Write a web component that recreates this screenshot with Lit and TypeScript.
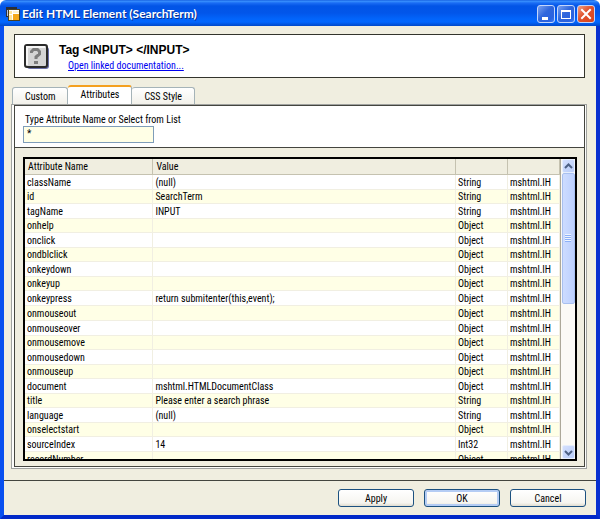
import { LitElement, html, css, svg } from "lit";
import { customElement, state } from "lit/decorators.js";
import { classMap } from "lit/directives/class-map.js";

interface Attribute {
  name: string;
  value: string;
  type: string;
}

const attr = (name: string, value = "", type = "Object"): Attribute => ({ name, value, type });

const ATTRIBUTES: Attribute[] = [
  attr("className", "(null)", "String"),
  attr("id", "SearchTerm", "String"),
  attr("tagName", "INPUT", "String"),
  attr("onhelp"),
  attr("onclick"),
  attr("ondblclick"),
  attr("onkeydown"),
  attr("onkeyup"),
  attr("onkeypress", "return submitenter(this,event);"),
  attr("onmouseout"),
  attr("onmouseover"),
  attr("onmousemove"),
  attr("onmousedown"),
  attr("onmouseup"),
  attr("document", "mshtml.HTMLDocumentClass"),
  attr("title", "Please enter a search phrase", "String"),
  attr("language", "(null)", "String"),
  attr("onselectstart"),
  attr("sourceIndex", "14", "Int32"),
  attr("recordNumber"),
];

const TABS = ["Custom", "Attributes", "CSS Style"];

@customElement("title-bar")
class TitleBar extends LitElement {
  static styles = css`
    :host {
      display: flex;
      align-items: center;
      height: 26px;
      flex: none;
      padding: 2px 5px 0 6px;
      box-sizing: border-box;
      border-radius: 6px 6px 0 0;
      background: linear-gradient(#0a50d8 0, #3c94ff 1px, #1a6cf4 3px, #0254e6 6px, #0256ea 13px, #0265fb 19px, #0266fe 22px, #0148c8 26px);
    }
    .logo { width: 14px; height: 14px; flex: none; }
    h1 {
      flex: 1;
      margin: 0 0 0 2px;
      font: bold 12px/16px Lato, sans-serif;
      color: #fff;
      white-space: nowrap;
      text-shadow: 1px 1px 0 #0a2f90;
    }
    .controls { display: flex; gap: 2px; }
    button {
      width: 18px;
      height: 18px;
      padding: 0;
      border: 1px solid #c3d6fc;
      border-radius: 3px;
      background: linear-gradient(135deg, #7ba2f0, #2f66dc 45%, #2a62e0 80%, #3c7cf4);
    }
    .close { background: linear-gradient(135deg, #f0a084, #e0522c 45%, #d8431c); }
    button svg { display: block; width: 16px; height: 16px; }
  `;

  render() {
    return html`
      <svg class="logo" viewBox="0 0 14 14" shape-rendering="crispEdges" aria-hidden="true">
        <path d="M0 0h11v10H0z" fill="#2a2f3c" />
        <path d="M1 3h1v6H1z" fill="#b8c4dc" />
        <path d="M2 2h12v12H2z" fill="#4a4020" />
        <path d="M3 3h10v10H3z" fill="#fff" />
        <path d="M3 4h3v3H3zM3 8h3v5H3z" fill="#ffe49a" />
        <path d="M7 7h6v6H7z" fill="#f4a818" />
        <path d="M7 4h6v2H7z" fill="#fff4d0" />
      </svg>
      <h1>Edit HTML Element (SearchTerm)</h1>
      <div class="controls">
        <button aria-label="Minimize">
          <svg viewBox="0 0 16 16"><path d="M4 11h6v3H4z" fill="#fff" /></svg>
        </button>
        <button aria-label="Maximize">
          <svg viewBox="0 0 16 16"><path d="M3 4h10v9H3zM4 6v6h8V6z" fill="#fff" fill-rule="evenodd" /></svg>
        </button>
        <button class="close" aria-label="Close">
          <svg viewBox="0 0 16 16"><path d="M4 4l8 8M12 4l-8 8" stroke="#fff" stroke-width="2" stroke-linecap="square" /></svg>
        </button>
      </div>
    `;
  }
}

@customElement("attribute-grid")
class AttributeGrid extends LitElement {
  static properties = { rows: { attribute: false } };
  declare rows: Attribute[];

  static styles = css`
    :host {
      display: flex;
      min-height: 0;
      overflow: hidden;
      border: 2px solid #000;
      background: #fff;
    }
    .rows { flex: 1; min-width: 0; overflow: hidden; border-right: 1px solid #aca899; }
    table {
      width: 100%;
      table-layout: fixed;
      border-collapse: separate;
      border-spacing: 0;
    }
    .name { width: 24%; }
    .type, .source { width: 52px; }
    th, td {
      box-sizing: border-box;
      height: 15px;
      padding: 0 0 0 2px;
      line-height: 13px;
      text-align: left;
      font-weight: normal;
      white-space: nowrap;
      overflow: hidden;
      border-right: 1px solid #f1efe2;
      border-bottom: 1px solid #f1efe2;
    }
    th {
      height: 16px;
      padding-left: 3px;
      line-height: 15px;
      background: #f0eee0;
      border-right-color: #c5c2b0;
      border-bottom-color: #c5c2b0;
    }
    tbody tr:nth-child(even) { background: #ffffe6; }
    tbody tr:nth-child(even) td { height: 14px; }
    tbody tr:nth-child(10n) td { height: 15px; }
    .scrollbar {
      display: flex;
      flex-direction: column;
      align-items: center;
      width: 14px;
      flex: none;
      background: #fbfaf6;
    }
    .scrollbar button {
      width: 13px;
      height: 14px;
      padding: 0;
      flex: none;
      border: 1px solid #e6eefc;
      border-radius: 2px;
      background: linear-gradient(135deg, #d4e0fe, #b8ccf8);
    }
    .scrollbar svg { display: block; margin: auto; width: 9px; height: 9px; }
    .track { flex: 1; display: flex; flex-direction: column; align-items: center; width: 100%; }
    .thumb {
      box-sizing: border-box;
      display: grid;
      place-content: center;
      width: 13px;
      height: 48%;
      border: 1px solid #a8c0f0;
      border-radius: 2px;
      background: linear-gradient(90deg, #cddcff, #bcd0fe);
    }
    .grip { width: 6px; height: 8px; background: repeating-linear-gradient(#eef4fe 0 1px, #8cb0f8 1px 2px); }
  `;

  render() {
    const chevron = (d: string) => html`
      <svg viewBox="0 0 9 9" fill="none" stroke="#4d6185" stroke-width="2" aria-hidden="true">${svg`<path d=${d} />`}</svg>
    `;
    return html`
      <div class="rows">
        <table>
          <thead>
            <tr>
              <th class="name">Attribute Name</th>
              <th>Value</th>
              <th class="type" aria-label="Type"></th>
              <th class="source" aria-label="Source"></th>
            </tr>
          </thead>
          <tbody>
            ${this.rows.map((row) => html`
              <tr><td>${row.name}</td><td>${row.value}</td><td>${row.type}</td><td>mshtml.IH</td></tr>
            `)}
          </tbody>
        </table>
      </div>
      <div class="scrollbar">
        <button aria-label="Scroll up">${chevron("M1 6l3.5-3.5L8 6")}</button>
        <div class="track"><div class="thumb"><div class="grip"></div></div></div>
        <button aria-label="Scroll down">${chevron("M1 3l3.5 3.5L8 3")}</button>
      </div>
    `;
  }
}

@customElement("app-root")
class AppRoot extends LitElement {
  @state() private tab = "Attributes";

  static styles = css`
    :host {
      display: flex;
      flex-direction: column;
      height: 100vh;
      color: #000;
      font: 10px/13px "Roboto Condensed", Roboto, sans-serif;
      background: #fff;
    }
    .client {
      flex: 1;
      min-height: 0;
      display: flex;
      flex-direction: column;
      border: solid #0831d9;
      border-width: 0 4px 4px;
      border-color: #0838e0 #0830d0 #0028c8 #0850f0;
      background: #f0eee0;
    }
    .banner {
      display: flex;
      align-items: center;
      gap: 10px;
      flex: none;
      height: 44px;
      box-sizing: border-box;
      margin: 8px 11px 7px 10px;
      padding-left: 9px;
      border: 1px solid #33342c;
      background: #fff;
    }
    .help { width: 25px; height: 25px; }
    h2 { margin: 0; padding-top: 4px; font: bold 12px/16px "Liberation Sans", sans-serif; white-space: nowrap; }
    .banner a { display: block; margin-left: 9px; line-height: 16px; color: #0000f0; }
    .tabs { display: flex; align-items: flex-end; height: 19px; flex: none; margin-left: 8px; }
    .tabs button {
      height: 17px;
      padding: 0 12px;
      font: inherit;
      border: 1px solid #a5b3b8;
      border-bottom: 0;
      border-left-width: 0;
      border-radius: 3px 3px 0 0;
      background: linear-gradient(#fff, #f2f1ea);
    }
    .tabs button:first-child { border-left-width: 1px; }
    .tabs .active {
      height: 19px;
      padding-bottom: 3px;
      border-top: 2px solid #f4a020;
      background: #fff;
    }
    .page {
      flex: 1;
      min-height: 0;
      display: flex;
      flex-direction: column;
      margin: 0 9px 11px 7px;
      padding: 0 1px 1px 2px;
      border: 1px solid #a0a2a0;
      background: #fdfdfb;
    }
    .frame {
      flex: 1;
      min-height: 0;
      display: flex;
      flex-direction: column;
      border: 1px solid #44453f;
      background: #f0eee0;
    }
    .filter {
      display: flex;
      flex-direction: column;
      align-items: flex-start;
      padding: 7px 8px 4px;
      border-bottom: 1px solid #44453f;
      background: #fff;
    }
    .filter label { padding-left: 2px; }
    .filter input {
      box-sizing: border-box;
      width: 131px;
      height: 17px;
      padding: 0 3px 3px;
      font: inherit;
      border: 1px solid #7f9db9;
      background: #ffffe6;
      outline: 0;
    }
    attribute-grid { flex: 1; margin: 9px 7px 5px 8px; }
    .actions {
      display: flex;
      justify-content: flex-end;
      gap: 10px;
      flex: none;
      padding: 8px 10px 8px;
      border-top: 1px solid #44453f;
    }
    .actions button {
      box-sizing: border-box;
      width: 76px;
      height: 18px;
      padding: 0;
      font: inherit;
      border: 1px solid #1c5180;
      border-radius: 3px;
      background: linear-gradient(#fff, #f6f5f0 80%, #e0dccf);
    }
    .actions .default { box-shadow: inset 0 0 0 2px #b4ccf4; }
  `;

  render() {
    return html`
      <title-bar></title-bar>
      <main class="client">
        <section class="banner">
          <svg class="help" viewBox="0 0 25 25" aria-hidden="true">
            <rect x="3" y="3" width="22" height="22" rx="3" fill="#6a6fa8" />
            <rect x="1" y="1" width="22" height="22" rx="2" fill="#d4d4d4" stroke="#2a2a2a" stroke-width="2" />
            <path d="M3 21V3h18" fill="none" stroke="#f6f6f6" stroke-width="2" />
            <path d="M7.500 9V7.500l2-2h4l2 2V10l-3.500 3v2" fill="none" stroke="#7c7c7c" stroke-width="3" />
            <path d="M10 17h4v3h-4z" fill="#7c7c7c" />
          </svg>
          <div>
            <h2>Tag &lt;INPUT&gt; &lt;/INPUT&gt;</h2>
            <a href="#documentation">Open linked documentation...</a>
          </div>
        </section>
        <div class="tabs" role="tablist">
          ${TABS.map((name) => html`
            <button
              role="tab"
              aria-selected=${name === this.tab}
              class=${classMap({ active: name === this.tab })}
              @click=${() => (this.tab = name)}
            >${name}</button>
          `)}
        </div>
        <section class="page">
          <div class="frame">
            <div class="filter">
              <label for="filter">Type Attribute Name or Select from List</label>
              <input id="filter" value="*" />
            </div>
            <attribute-grid .rows=${ATTRIBUTES}></attribute-grid>
          </div>
        </section>
        <footer class="actions">
          <button>Apply</button>
          <button class="default">OK</button>
          <button>Cancel</button>
        </footer>
      </main>
    `;
  }
}
